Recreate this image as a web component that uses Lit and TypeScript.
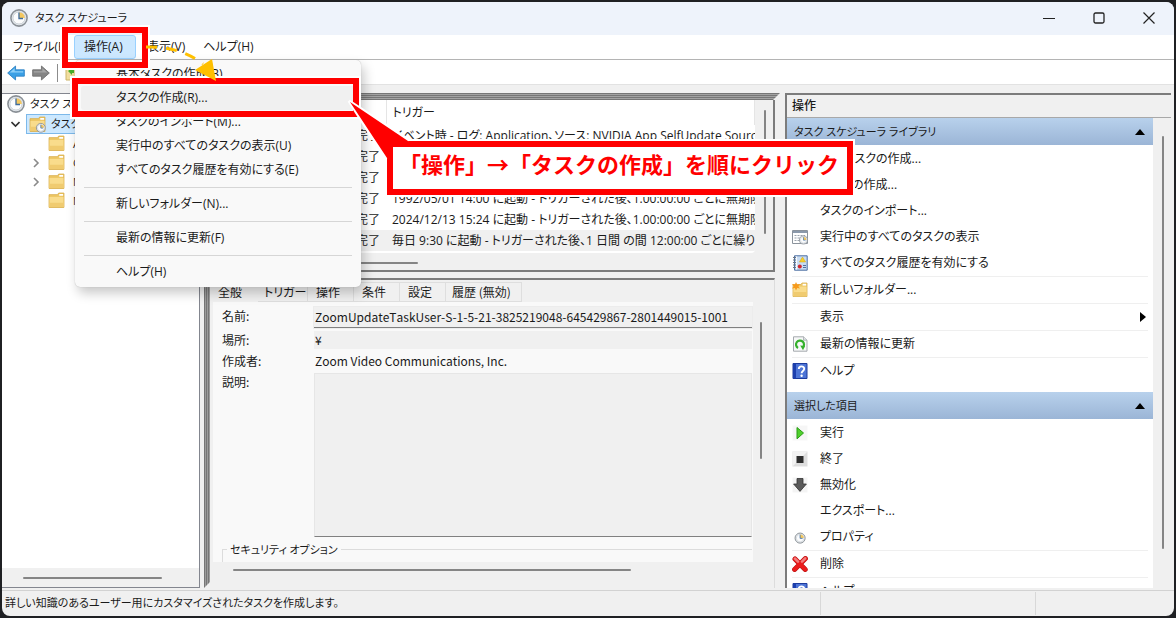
import { LitElement, html, css, svg, nothing, TemplateResult } from "lit";

type Action = { icon?: string; label: string; sep?: boolean; sub?: boolean };

const clockFace = svg`
  <circle cx="8" cy="8" r="7.2" fill="#e9edf1" stroke="#8a9096" stroke-width="1.4"/>
  <circle cx="8" cy="8" r="5.4" fill="#fbfcfd" stroke="#c3c9cf" stroke-width=".8"/>
  <path d="M8 8V2.8A5.2 5.2 0 0 1 13.2 8Z" fill="#f3c75f"/>
  <path d="M8 3.2V8.4H11.6" fill="none" stroke="#3f6c9c" stroke-width="1.2"/>`;

const folder = svg`
  <path d="M1 2.5H9L10 1H15V14.5H1Z" fill="#eec866" stroke="#d9ad4a" stroke-width=".8"/>
  <path d="M10.6 1.8H14.2V3.6H10.6Z" fill="#fff"/>
  <path d="M1.4 4.6H14.6V14.2H1.4Z" fill="#f9dc8c"/>
  <path d="M1.4 10H14.6V14.2H1.4Z" fill="#f0cb70"/>`;

const glyphs: Record<string, TemplateResult> = {
  clock: clockFace,
  folder,
  folderClock: svg`${folder}<g transform="translate(6.5 6.5) scale(.58)">${clockFace}</g>`,
  smallClock: svg`<g transform="translate(2.5 3.5) scale(.7)">${clockFace}</g>`,
  running: svg`
    <path d="M.5 1.5H15.5V14.5H.5Z" fill="#fff" stroke="#8b939c"/>
    <path d="M1 2H15V4H1Z" fill="#8b99ab"/>
    <path d="M2.5 6.5H13M2.5 9H10M2.5 11.5H8" stroke="#9aa3ad" stroke-dasharray="2 1"/>
    <g transform="translate(7 6.5) scale(.56)">${clockFace}</g>`,
  history: svg`
    <path d="M2.5 .8H15.2V15.2H2.5Z" fill="#c8dcf3" stroke="#4a6da0"/>
    <path d="M4.6 1.4V14.6" stroke="#fff"/>
    <path d="M1 2.5H4M1 5H4M1 7.5H4M1 10H4M1 12.5H4" stroke="#6b7480" stroke-width="1.1"/>
    <path d="M10.5 2L13.6 7H7.4Z" fill="#f6cf2b" stroke="#d2a514" stroke-width=".5"/>
    <circle cx="7.8" cy="11.5" r="2" fill="#d3262c"/>
    <path d="M11 10.5H14M11 12.5H14" stroke="#50709c"/>`,
  newFolder: svg`${folder}<path d="M4 0L5.2 2.4L8 2L6.4 4.2L8 6.6L5.2 6.1L4 8.6L2.9 6.1L0 6.6L1.7 4.2L0 2L2.9 2.4Z" fill="#f79a1c"/>`,
  refresh: svg`
    <path d="M1.5 .8H11.5L15 4.2V15.2H1.5Z" fill="#f7f8f8" stroke="#a4a9ad"/>
    <path d="M11.5 .8V4.2H15" fill="#dfe2e5" stroke="#a4a9ad" stroke-width=".8"/>
    <path d="M6 12A4 4 0 1 1 10.6 11.6" fill="none" stroke="#35b02c" stroke-width="2.2"/>
    <path d="M8.2 9.6L13 10L11 14.2Z" fill="#35b02c"/>`,
  help: svg`
    <path d="M1 .5H15V15.5H1Z" fill="#4d74d6" stroke="#1c3a9c"/>
    <path d="M1 .5H4V15.5H1Z" fill="#1d3fae"/>
    <path d="M6.8 6C6.8 2.6 12.2 2.6 12.2 5.8C12.2 8 9.6 7.9 9.6 10.2" fill="none" stroke="#fff" stroke-width="1.9"/>
    <circle cx="9.6" cy="12.8" r="1.2" fill="#fff"/>`,
  run: svg`<path d="M.5 .5H15.5V15.5H.5Z" fill="#f6f6f6"/><path d="M5 2.5L11.5 8L5 13.8Z" fill="#4fd02c" stroke="#2a9c14"/>`,
  stop: svg`<path d="M.5 .5H15.5V15.5H.5Z" fill="#dedede"/><path d="M.5 .5H15.5L.5 15.5Z" fill="#f3f3f3"/><path d="M4.5 5H11.5V12H4.5Z" fill="#2e2e2e"/>`,
  disable: svg`<path d="M.5 .5H15.5V15.5H.5Z" fill="#f4f4f4"/><path d="M5 1.5H11V7H14.4L8 14.4L1.6 7H5Z" fill="#5a5a5a" stroke="#333" stroke-width=".8"/>`,
  remove: svg`
    <path d="M3 3L13.2 13.4M13.4 2.6L2.6 13.4" stroke="#b81414" stroke-width="5" stroke-linecap="round"/>
    <path d="M3 3L13.2 13.4M13.4 2.6L2.6 13.4" stroke="#ea1c1c" stroke-width="4" stroke-linecap="round"/>
    <path d="M3 2.6L6 5.6M13.2 2.4L10 5.6" stroke="#f27d7d" stroke-width="2.6" stroke-linecap="round"/>`,
  back: svg`<path d="M.6 8L7.6 1.8V5.2H15.4V10.8H7.6V14.2Z" fill="#3aa0e6" stroke="#2f82c4" stroke-width=".8"/><path d="M2.4 7.6L6.8 3.8V6.4H14.4V7.6Z" fill="#8fd0f8"/>`,
  forward: svg`<path d="M15.4 8L8.4 1.8V5.2H.6V10.8H8.4V14.2Z" fill="#858585" stroke="#707070" stroke-width=".8"/><path d="M13.6 7.6L9.2 3.8V6.4H1.6V7.6Z" fill="#a6a6a6"/>`,
  flag: svg`<path d="M1 1H14V15H1Z" fill="#f3dfa0" stroke="#cdb56a"/><path d="M3 6L7 3V5H9V8H7V10Z" fill="#47b02c"/>`,
};

const icon = (name: string, size = 16) =>
  html`<svg class="icon" width=${size} height=${size} viewBox="0 0 16 16" aria-hidden="true">${glyphs[name]}</svg>`;

const libraryActions: Action[] = [
  { label: "基本タスクの作成..." },
  { label: "タスクの作成..." },
  { label: "タスクのインポート..." },
  { label: "実行中のすべてのタスクの表示", icon: "running" },
  { label: "すべてのタスク履歴を有効にする", icon: "history" },
  { label: "新しいフォルダー...", icon: "newFolder", sep: true },
  { label: "表示", sep: true, sub: true },
  { label: "最新の情報に更新", icon: "refresh", sep: true },
  { label: "ヘルプ", icon: "help", sep: true },
];

const itemActions: Action[] = [
  { label: "実行", icon: "run" },
  { label: "終了", icon: "stop" },
  { label: "無効化", icon: "disable" },
  { label: "エクスポート..." },
  { label: "プロパティ", icon: "smallClock" },
  { label: "削除", icon: "remove", sep: true },
  { label: "ヘルプ", icon: "help", sep: true },
];

const popupItems = [
  { label: "基本タスクの作成(B)..." },
  { label: "タスクの作成(R)...", active: true },
  { label: "タスクのインポート(M)..." },
  { label: "実行中のすべてのタスクの表示(U)" },
  { label: "すべてのタスク履歴を有効にする(E)" },
  { label: "新しいフォルダー(N)...", sep: true },
  { label: "最新の情報に更新(F)", sep: true },
  { label: "ヘルプ(H)", sep: true },
];

const triggers = [
  "イベント時 - ログ: Application、ソース: NVIDIA App SelfUpdate Source",
  "",
  "",
  "1992/05/01 14:00 に起動 - トリガーされた後、1.00:00:00 ごとに無期限に繰り返します。",
  "2024/12/13 15:24 に起動 - トリガーされた後、1.00:00:00 ごとに無期限に繰り返します。",
  "毎日 9:30 に起動 - トリガーされた後、1 日間 の間 12:00:00 ごとに繰り返します。",
];

class AppRoot extends LitElement {
  static styles = css`
    :host {
      display: block;
      height: 100vh;
      min-height: 480px;
      box-sizing: border-box;
      padding: 2px;
      overflow: hidden;
      position: relative;
      background: #1f2023;
      color: #1a1a1a;
      font: 12px/20px "Open Sans", "Noto Sans CJK JP", sans-serif;
      font-feature-settings: "palt";
    }
    * { box-sizing: border-box; }
    button, input, textarea {
      font: inherit;
      font-feature-settings: inherit;
      color: inherit;
      background: none;
      border: 0;
      margin: 0;
      padding: 0;
      text-align: left;
      white-space: nowrap;
    }
    svg { flex: none; }
    ul { list-style: none; margin: 0; padding: 0; }
    .icon { flex: none; display: block; }
    .window {
      height: 100%;
      display: flex;
      flex-direction: column;
      background: #f0f0f0;
      border-radius: 8px;
      overflow: hidden;
    }
    .titlebar {
      height: 33px;
      flex: none;
      display: flex;
      align-items: center;
      gap: 7px;
      padding: 0 19px 2px 8px;
      background: #eef3fb;
    }
    .titlebar h1 { flex: 1; margin: 0; font-size: 11px; font-weight: 400; }
    .caption { display: flex; gap: 38px; }
    .caption button { width: 12px; height: 12px; display: block; }
    .menubar {
      height: 25px;
      flex: none;
      display: flex;
      align-items: center;
      background: #fff;
      border-bottom: 1px solid #b4b4b4;
      padding-left: 2px;
    }
    .menubar button { height: 24px; padding: 0 9px; }
    .menubar .file { width: 70px; }
    .menubar .open {
      width: 62px;
      margin-right: 2px;
      background: #cce8ff;
      border: 1px solid #99d1ff;
      border-radius: 3px;
    }
    .toolbar {
      height: 24px;
      flex: none;
      display: flex;
      align-items: center;
      gap: 7px;
      padding: 2px 5px 0;
      background: #fff;
    }
    .toolbar i { width: 1px; height: 18px; background: #8c8c8c; }
    .panes {
      flex: 1;
      min-height: 0;
      display: flex;
      border-top: 1px solid #e2e2e2;
      padding: 8px 3px 2px 0;
    }
    .tree {
      width: 198px;
      flex: none;
      display: flex;
      flex-direction: column;
      background: #fff;
      border: solid #83868f;
      border-width: 1px 1px 1px 0;
      font-size: 11px;
    }
    .tree ul { flex: 1; overflow: hidden; }
    .tree button { display: flex; align-items: center; gap: 5px; width: 100%; height: 20px; padding-left: 5px; }
    .tree .child { height: 19px; padding-left: 30px; gap: 8px; }
    .tree .lib { padding-left: 9px; gap: 6px; }
    .tree .label {
      display: flex;
      flex: 1;
      min-width: 0;
      overflow: hidden;
      align-items: center;
      gap: 5px;
      height: 20px;
      padding-left: 2px;
      background: #cce8ff;
      border: 1px solid #7db9ea;
    }
    .hbar { height: 19px; flex: none; display: flex; align-items: center; background: #f0f0f0; }
    .thumb { background: #858585; border-radius: 1px; }
    .tree .thumb { width: 139px; height: 2px; margin-left: 21px; }
    .center {
      flex: 1;
      min-width: 0;
      margin-left: 4px;
      display: grid;
      grid-template: 7px 172px 6px 1fr / 6px 1fr;
    }
    .edge-top {
      grid-column: 1 / -1;
      background: repeating-linear-gradient(#767676 0 1px, #a2a2a2 1px 2px);
      clip-path: polygon(0 0, 100% 0, calc(100% - 7px) 100%, 0 100%);
    }
    .edge-left {
      grid-row: 2 / -1;
      background: repeating-linear-gradient(90deg, #767676 0 1px, #9c9c9c 1px 2px);
      clip-path: polygon(0 0, 100% 0, 100% calc(100% - 6px), 0 100%);
    }
    .list {
      grid-column: 2;
      margin-right: 5px;
      min-width: 0;
      display: grid;
      grid-template: 153px 1fr / 1fr 18px;
      border: solid #7c7c7c;
      border-width: 0 2px 2px 0;
    }
    .rows { background: #fff; overflow: hidden; border-radius: 0 0 4px 0; }
    table { width: 100%; border-collapse: collapse; table-layout: fixed; }
    th, td { padding: 0 0 0 6px; height: 21px; text-align: left; font-weight: 400; white-space: nowrap; overflow: hidden; }
    th { height: 25px; border-right: 1px solid #e5e5e5; }
    .c-name { width: 116px; }
    .c-status { width: 60px; }
    .picked { background: #f0f0f0; }
    .list .v { width: 2px; height: 124px; margin: 10px 0 0 9px; }
    .list .h { width: 180px; height: 2px; margin: 9px 0 0 28px; }
    .detail {
      grid-column: 2;
      min-width: 0;
      min-height: 0;
      margin-right: 5px;
      display: grid;
      grid-template: 22px 1fr 26px / 1fr 21px;
      border-top: 2px solid #7c7c7c;
      border-right: 1px solid #dcdcdc;
      font-family: "Noto Sans CJK JP", sans-serif;
    }
    .tabs { display: flex; align-items: flex-end; grid-column: 1 / -1; }
    .tabs button { height: 20px; line-height: 18px; padding: 0 0 0 8px; width: 46px; border: solid #dedede; border-width: 1px 1px 1px 0; }
    .tabs .wide { width: 50px; padding-left: 6px; }
    .tabs .long { width: 76px; padding-left: 6px; }
    .tabs .on { border: 0; width: 48px; }
    .form {
      background: #f9f9f9;
      margin-left: 3px;
      overflow: hidden;
      display: grid;
      grid-template: 21px 18px 18px 1fr 22px / 92px 1fr;
      row-gap: 3px;
      padding: 5px 1px 0 9px;
    }
    .form label { font-size: 12px; line-height: 18px; }
    .form input { width: 100%; min-width: 0; background: #f0f0f0; padding-left: 1px; font-feature-settings: normal; font-kerning: none; }
    .form .name { border-bottom: 1px solid #808080; box-shadow: 0 0 0 1px #ececec; }
    .form .plain { background: none; }
    .form textarea { width: 100%; background: #f0f0f0; border: 1px solid #e6e6e6; border-bottom: 1px solid #808080; resize: none; display: block; height: 100%; }
    fieldset { grid-column: 1 / -1; min-width: 0; margin: 0; padding: 0; border: solid #dcdcdc; border-width: 1px 0 0 1px; }
    legend { margin-left: 4px; padding: 0 3px; font-size: 11px; line-height: 18px; }
    .detail .v { width: 2px; height: 137px; margin: 20px 0 0 7px; }
    .detail .h { width: 398px; height: 2px; margin: 7px 0 0 23px; }
    .actions {
      width: 386px;
      flex: none;
      margin-left: 5px;
      display: flex;
      flex-direction: column;
      border: solid #7c7c7c;
      border-width: 2px 0 0 2px;
    }
    .actions h2 { margin: 0; height: 23px; line-height: 22px; padding-left: 5px; font-size: 12px; font-weight: 500; border-bottom: 1px solid #a8a8a8; }
    .scroll { flex: 1; min-height: 0; display: flex; }
    .scroll .v { width: 2px; height: 413px; margin: 18px 7px 0 9px; }
    .groups { flex: 1; background: #fff; overflow: hidden; }
    .bar {
      width: 100%;
      height: 27px;
      display: flex;
      align-items: center;
      justify-content: space-between;
      padding: 0 8px 0 7px;
      font-size: 11px;
      background: linear-gradient(#b8d1ec, #9bb5d6);
    }
    .groups ul { padding: 1px 5px 8px; }
    .groups li.sep { border-top: 1px solid #efefef; }
    .groups li button { width: 100%; height: 26px; display: flex; align-items: center; gap: 12px; }
    .slot { width: 16px; flex: none; }
    .grow { flex: 1; }
    .status { height: 26px; flex: none; display: flex; border-top: 1px solid #d2d2d2; line-height: 24px; padding-left: 3px; font-size: 11px; }
    .status span { width: 215px; margin: 1px 0; border-left: 1px solid #d8d8d8; }
    .status .end { width: 139px; }
    .status p { flex: 1; margin: 0; }
    .popup {
      position: absolute;
      left: 75px;
      top: 60px;
      width: 286px;
      padding: 2px 6px 3px;
      background: #f9f9f9;
      border-radius: 5px;
      box-shadow: 0 0 1px #aaa, 3px 6px 12px rgba(0, 0, 0, .22);
    }
    .popup button { display: block; width: 100%; height: 24px; line-height: 24px; padding-left: 35px; border-radius: 3px; }
    .popup .active { background: #f0f0f0; }
    .popup .sep { border-top: 1px solid #d6d6d6; margin: 5px 3px 0; padding-top: 4px; }
    .popup .sep button { padding-left: 32px; }
    .frame { position: absolute; border: 6px solid #f00; box-shadow: 0 0 0 2px #fff; pointer-events: none; }
    .frame-menu { left: 62px; top: 27px; width: 86px; height: 41px; }
    .frame-item { left: 72px; top: 78px; width: 287px; height: 39px; }
    .callout {
      position: absolute;
      left: 387px;
      top: 141px;
      height: 54px;
      padding: 0 8px 0 6px;
      margin: 0;
      border: 6px solid #f00;
      box-shadow: 0 0 0 2px #fff;
      background: #fff;
      color: #f00;
      font: 700 22px/32px "Noto Sans CJK JP", sans-serif;
      font-feature-settings: normal;
      white-space: nowrap;
    }
    .marks { position: absolute; left: 0; top: 0; pointer-events: none; }
  `;

  private actionList(items: Action[]) {
    return html`<ul>
      ${items.map(
        (a) => html`<li class=${a.sep ? "sep" : ""}>
          <button>
            <span class="slot">${a.icon ? icon(a.icon) : nothing}</span>
            <span class="grow">${a.label}</span>
            ${a.sub ? html`<svg width="8" height="10" viewBox="0 0 8 10"><path d="M0 0L6 5L0 10Z" fill="#000" /></svg>` : nothing}
          </button>
        </li>`,
      )}
    </ul>`;
  }

  private bar(title: string) {
    return html`<button class="bar">
      ${title}<svg width="10" height="6" viewBox="0 0 10 6"><path d="M0 6L5 0L10 6Z" fill="#000" /></svg>
    </button>`;
  }

  private child(name: string, chevron: boolean) {
    return html`<li>
      <button class="child">
        <svg width="8" height="10" viewBox="0 0 8 10">
          ${chevron ? svg`<path d="M2 1L6 5L2 9" fill="none" stroke="#8a8a8a" stroke-width="1.6"/>` : nothing}
        </svg>
        ${icon("folder", 17)}${name}
      </button>
    </li>`;
  }

  render() {
    return html`
      <div class="window">
        <header class="titlebar">
          ${icon("clock", 18)}
          <h1>タスク スケジューラ</h1>
          <div class="caption">
            <button aria-label="最小化"><svg class="icon" width="12" height="12"><path d="M0 6.5H12" stroke="#222" stroke-width="1.2" /></svg></button>
            <button aria-label="最大化"><svg class="icon" width="12" height="12"><rect x="1" y="1" width="10" height="10" rx="1.5" fill="none" stroke="#222" stroke-width="1.3" /></svg></button>
            <button aria-label="閉じる"><svg class="icon" width="12" height="12"><path d="M.5 .5L11.5 11.5M11.5 .5L.5 11.5" stroke="#222" stroke-width="1.2" /></svg></button>
          </div>
        </header>
        <nav class="menubar">
          <button class="file">ファイル(F)</button>
          <button class="open">操作(A)</button>
          <button>表示(V)</button>
          <button>ヘルプ(H)</button>
        </nav>
        <div class="toolbar">
          <button aria-label="戻る">${icon("back", 18)}</button>
          <button aria-label="進む">${icon("forward", 18)}</button>
          <i></i>
          <button aria-label="上へ">${icon("flag", 16)}</button>
        </div>
        <main class="panes">
          <section class="tree">
            <ul>
              <li><button>${icon("clock", 18)}タスク スケジューラ (ローカル)</button></li>
              <li>
                <button class="lib">
                  <svg width="9" height="8" viewBox="0 0 9 8"><path d="M.5 2L4.5 6L8.5 2" fill="none" stroke="#333" stroke-width="1.6" /></svg>
                  <span class="label">${icon("folderClock", 17)}タスク スケジューラ ライブラリ</span>
                </button>
              </li>
              ${this.child("A", false)} ${this.child("G", true)} ${this.child("M", true)} ${this.child("M", false)}
            </ul>
            <div class="hbar"><div class="thumb"></div></div>
          </section>
          <section class="center">
            <div class="edge-top"></div>
            <div class="edge-left"></div>
            <div class="list">
              <div class="rows">
                <table>
                  <colgroup><col class="c-name" /><col class="c-status" /><col /></colgroup>
                  <thead><tr><th>名前</th><th>状態</th><th>トリガー</th></tr></thead>
                  <tbody>
                    ${triggers.map(
                      (t, i) => html`<tr class=${i === triggers.length - 1 ? "picked" : ""}>
                        <td></td><td>準備完了</td><td>${t}</td>
                      </tr>`,
                    )}
                  </tbody>
                </table>
              </div>
              <div class="thumb v"></div>
              <div class="thumb h"></div>
            </div>
            <div></div>
            <div class="detail">
              <div class="tabs">
                <button class="on">全般</button><button class="wide">トリガー</button><button>操作</button><button>条件</button><button>設定</button><button class="long">履歴 (無効)</button>
              </div>
              <div class="form">
                <label for="name">名前:</label>
                <input id="name" class="name" readonly .value=${"ZoomUpdateTaskUser-S-1-5-21-3825219048-645429867-2801449015-1001"} />
                <label for="place">場所:</label>
                <input id="place" readonly .value=${"¥"} />
                <label for="author">作成者:</label>
                <input id="author" class="plain" readonly .value=${"Zoom Video Communications, Inc."} />
                <label for="desc">説明:</label>
                <textarea id="desc" readonly></textarea>
                <fieldset><legend>セキュリティ オプション</legend></fieldset>
              </div>
              <div class="thumb v"></div>
              <div class="thumb h"></div>
            </div>
          </section>
          <aside class="actions">
            <h2>操作</h2>
            <div class="scroll">
              <div class="groups">
                ${this.bar("タスク スケジューラ ライブラリ")} ${this.actionList(libraryActions)}
                ${this.bar("選択した項目")} ${this.actionList(itemActions)}
              </div>
              <div class="thumb v"></div>
            </div>
          </aside>
        </main>
        <footer class="status">
          <p>詳しい知識のあるユーザー用にカスタマイズされたタスクを作成します。</p>
          <span></span><span class="end"></span>
        </footer>
      </div>

      <div class="popup">
        ${popupItems.map(
          (p) => html`<div class=${p.sep ? "sep" : ""}><button class=${p.active ? "active" : ""}>${p.label}</button></div>`,
        )}
      </div>
      <div class="frame frame-menu"></div>
      <div class="frame frame-item"></div>
      <p class="callout">「操作」→「タスクの作成」を順にクリック</p>
      <svg class="marks" width="420" height="170" aria-hidden="true">
        <path d="M386 159L349 101L409 140" fill="none" stroke="#fff" stroke-width="3" />
        <path d="M387 158L350 102L408 141V145H391V158Z" fill="#f00" />
        <path d="M146 47Q180 46 203 64" fill="none" stroke="#ffc000" stroke-width="3" stroke-dasharray="11 9" />
        <path d="M195 70L212 59L216 81Z" fill="#ffc000" />
      </svg>
    `;
  }
}

customElements.define("app-root", AppRoot);
